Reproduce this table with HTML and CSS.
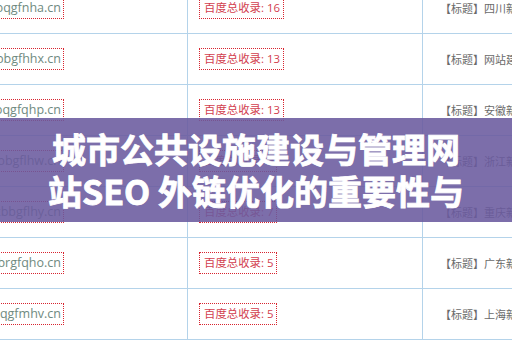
FILE: index.html
```html
<!DOCTYPE html>
<html lang="zh">
<head>
<meta charset="utf-8">
<link rel="stylesheet" href="styles.css">
</head>
<body>
<div class="page">
  <div class="table">
    <div class="row">
      <div class="c1"><span class="dom">www.bqgfnha.cn</span></div>
      <div class="c2"><span class="cnt">百度总收录: 16</span></div>
      <div class="c3">【标题】四川新闻网站建设</div>
    </div>
    <div class="row">
      <div class="c1"><span class="dom">www.xbbgfhhx.cn</span></div>
      <div class="c2"><span class="cnt">百度总收录: 13</span></div>
      <div class="c3">【标题】网站建设优化</div>
    </div>
    <div class="row">
      <div class="c1"><span class="dom">www.bqgfqhp.cn</span></div>
      <div class="c2"><span class="cnt">百度总收录: 13</span></div>
      <div class="c3">【标题】安徽新闻网站</div>
    </div>
    <div class="row">
      <div class="c1"><span class="dom">www.xbbgflhw.cn</span></div>
      <div class="c2"><span class="cnt">百度总收录: 9</span></div>
      <div class="c3">【标题】浙江新闻网站</div>
    </div>
    <div class="row">
      <div class="c1"><span class="dom">www.xbbgflhy.cn</span></div>
      <div class="c2"><span class="cnt">百度总收录: 7</span></div>
      <div class="c3">【标题】重庆新闻网站</div>
    </div>
    <div class="row">
      <div class="c1"><span class="dom">www.brgfqho.cn</span></div>
      <div class="c2"><span class="cnt">百度总收录: 5</span></div>
      <div class="c3">【标题】广东新闻网站</div>
    </div>
    <div class="row">
      <div class="c1"><span class="dom">www.bqgfmhv.cn</span></div>
      <div class="c2"><span class="cnt">百度总收录: 5</span></div>
      <div class="c3">【标题】上海新闻网站</div>
    </div>
  </div>
  <div class="banner">
    <h1 class="title">城市公共设施建设与管理网<br>站SEO 外链优化的重要性与</h1>
  </div>
</div>
</body>
</html>
```

FILE: styles.css
```css
html, body {
  margin: 0;
  padding: 0;
  background: #ffffff;
}
.page {
  position: relative;
  width: 512px;
  height: 340px;
  overflow: hidden;
  font-family: "Open Sans", "Noto Sans CJK SC", sans-serif;
}
.table {
  margin-top: -17px;
  display: flex;
  flex-direction: column;
}
.row {
  display: grid;
  grid-template-columns: 188px 235px 1fr;
  height: 50px;
  border-bottom: 1px solid #b4d3ea;
}
.c1, .c2, .c3 {
  display: flex;
  align-items: center;
  white-space: nowrap;
  overflow: hidden;
}
.c1 {
  justify-content: flex-end;
  padding-right: 123px;
  border-right: 1px solid #b4d3ea;
}
.c2 {
  padding-left: 11px;
  border-right: 1px solid #b4d3ea;
}
.c3 {
  padding-left: 17px;
  font-size: 11px;
  color: #6a6a6a;
}
.dom {
  flex: none;
  font-size: 12.5px;
  line-height: 20px;
  color: #6f8a80;
  padding: 0 2px;
  border: 1px dotted #d8242f;
}
.cnt {
  font-size: 11.4px;
  line-height: 20px;
  color: #d2404e;
  padding: 0 3px 0 4px;
  border: 1px dotted #d8242f;
}
.banner {
  position: absolute;
  left: 0;
  right: 0;
  top: 118px;
  height: 104px;
  background: rgba(106, 90, 158, 0.88);
  display: flex;
  align-items: center;
  justify-content: center;
}
.title {
  margin: 0;
  font-family: "Noto Sans CJK SC", sans-serif;
  font-weight: 700;
  font-size: 34px;
  line-height: 42px;
  color: #ffffff;
  -webkit-text-stroke: 0.8px #ffffff;
  text-align: center;
}
```
